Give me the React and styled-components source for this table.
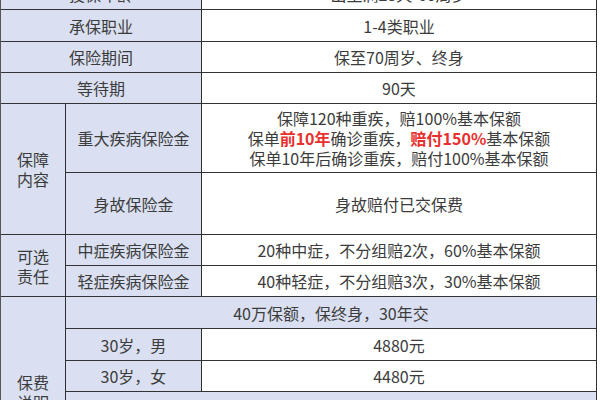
import styled, { createGlobalStyle } from "styled-components";

const GlobalStyle = createGlobalStyle`
  html, body {
    margin: 0;
    padding: 0;
    background: #ffffff;
    overflow: hidden;
  }
  body {
    font-family: "Noto Sans CJK SC", "Noto Sans", sans-serif;
  }
`;

const rowHeights = [32, 32, 31, 31, 69, 62, 31, 31, 32, 32, 31, 32, 32, 32];

const Table = styled.div`
  display: grid;
  grid-template-columns: 65px 136px 395px;
  grid-template-rows: ${rowHeights.map((h) => `${h}px`).join(" ")};
  width: 597px;
  box-sizing: border-box;
  margin-top: -23px;
  border-top: 1px solid #333;
  border-left: 1px solid #555;
`;

const Cell = styled.div`
  grid-column: ${(p) => p.$col};
  grid-row: ${(p) => p.$row};
  box-sizing: border-box;
  display: flex;
  flex-direction: column;
  align-items: center;
  justify-content: center;
  text-align: center;
  border-right: 1px solid #2f2f2f;
  border-bottom: 1px solid #333;
  background: ${(p) => (p.$label ? "#dae0f1" : "#ffffff")};
  color: #3c3c3c;
  font-size: 16px;
  line-height: 20px;
  white-space: nowrap;
`;

const Red = styled.span`
  color: #e8302e;
  font-weight: bold;
`;

const basicRows = [
  ["投保年龄", "出生满28天-60周岁"],
  ["承保职业", "1-4类职业"],
  ["保险期间", "保至70周岁、终身"],
  ["等待期", "90天"],
];

export default function App() {
  return (
    <>
      <GlobalStyle />
      <Table>
        {basicRows.map(([label, value], i) => (
          <Fragmentish key={label} row={i + 1} label={label} value={value} />
        ))}

        <Cell $label $col="1" $row="5 / 7">
          保障<br />内容
        </Cell>
        <Cell $label $col="2" $row="5">重大疾病保险金</Cell>
        <Cell $col="3" $row="5">
          <div>保障120种重疾，赔100%基本保额</div>
          <div>
            保单<Red>前10年</Red>确诊重疾，<Red>赔付150%</Red>基本保额
          </div>
          <div>保单10年后确诊重疾，赔付100%基本保额</div>
        </Cell>
        <Cell $label $col="2" $row="6">身故保险金</Cell>
        <Cell $col="3" $row="6">身故赔付已交保费</Cell>

        <Cell $label $col="1" $row="7 / 9">
          可选<br />责任
        </Cell>
        <Cell $label $col="2" $row="7">中症疾病保险金</Cell>
        <Cell $col="3" $row="7">20种中症，不分组赔2次，60%基本保额</Cell>
        <Cell $label $col="2" $row="8">轻症疾病保险金</Cell>
        <Cell $col="3" $row="8">40种轻症，不分组赔3次，30%基本保额</Cell>

        <Cell $label $col="1" $row="9 / 15">
          保费<br />说明
        </Cell>
        <Cell $label $col="2 / 4" $row="9">40万保额，保终身，30年交</Cell>
        <Cell $label $col="2" $row="10">30岁，男</Cell>
        <Cell $col="3" $row="10">4880元</Cell>
        <Cell $label $col="2" $row="11">30岁，女</Cell>
        <Cell $col="3" $row="11">4480元</Cell>
        <Cell $label $col="2 / 4" $row="12">40万保额，保至70岁，30年交</Cell>
        <Cell $label $col="2" $row="13">30岁，男</Cell>
        <Cell $col="3" $row="13">3640元</Cell>
        <Cell $label $col="2" $row="14">30岁，女</Cell>
        <Cell $col="3" $row="14">3320元</Cell>
      </Table>
    </>
  );
}

function Fragmentish({ row, label, value }) {
  return (
    <>
      <Cell $label $col="1 / 3" $row={row}>{label}</Cell>
      <Cell $col="3" $row={row}>{value}</Cell>
    </>
  );
}
